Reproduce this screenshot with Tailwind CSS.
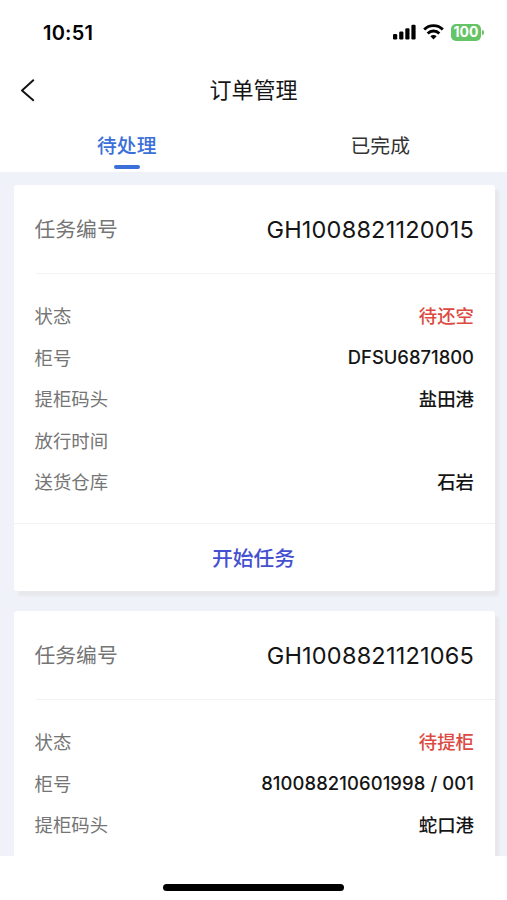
<!DOCTYPE html>
<html lang="zh-CN">
<head>
    <meta charset="UTF-8">
    <meta name="viewport" content="width=device-width, initial-scale=1.0">
    <title>订单管理</title>
    <script src="https://cdn.jsdelivr.net/npm/@tailwindcss/browser@4"></script>
</head>
<body class="bg-white font-['Inter','Noto_Sans_CJK_SC',sans-serif] text-[#151515]">
    <div class="flex flex-col h-[900px] w-[507px] overflow-hidden">
        <!-- Status bar -->
        <div class="flex items-center justify-between h-16 pl-[43px] pr-[23px] shrink-0">
            <span class="pt-px text-[20px] leading-none font-semibold tracking-[0.2px] text-black">10:51</span>
            <div class="flex items-center">
                <svg class="w-[23px] h-[16px]" viewBox="0 0 23 16" fill="#000">
                    <rect x="0" y="10" width="4.2" height="5.5" rx="1.2"/>
                    <rect x="6.2" y="7.5" width="4.2" height="8" rx="1.2"/>
                    <rect x="12.3" y="4.2" width="4.2" height="11.3" rx="1.2"/>
                    <rect x="18.4" y="0.7" width="4.2" height="14.8" rx="1.2"/>
                </svg>
                <svg class="w-[21px] h-[16px] ml-[7px]" viewBox="0 0 21 16" fill="none" stroke="#000" stroke-width="2.9">
                    <path d="M1.2 5.5a13.2 13.2 0 0 1 18.6 0"/>
                    <path d="M4.7 9.5a8.1 8.1 0 0 1 11.6 0"/>
                    <path d="M10.5 15.4l-3.1-3.2a4.4 4.4 0 0 1 6.2 0z" fill="#000" stroke="none"/>
                </svg>
                <div class="flex items-center justify-center w-[30px] h-[17px] ml-[7px] rounded-[5px] bg-[#65c466] text-white text-[14px] leading-none font-bold">100</div>
                <div class="w-[2px] h-[5px] ml-px rounded-r-full bg-[#65c466]"></div>
            </div>
        </div>

        <!-- Title bar -->
        <div class="grid grid-cols-3 items-center h-[52px] px-5 shrink-0">
            <svg class="w-4 h-6" viewBox="0 0 16 24" fill="none" stroke="#111" stroke-width="1.9" stroke-linejoin="round">
                <path d="M13.8 1.8L2 12.5l11.8 10.3"/>
            </svg>
            <h1 class="text-[22px] leading-none text-center">订单管理</h1>
        </div>

        <!-- Tabs -->
        <div class="grid grid-cols-2 h-[56px] text-[19.8px] shrink-0">
            <div class="flex flex-col items-center justify-between pt-[15px] pb-[3px] font-medium text-[#3b6fd9]">
                <span class="leading-[30px]">待处理</span>
                <span class="w-[26px] h-1 rounded-full bg-[#3b6fd9]"></span>
            </div>
            <div class="flex flex-col items-center pt-[15px] text-[#333]">
                <span class="leading-[30px]">已完成</span>
            </div>
        </div>

        <!-- Order list -->
        <div class="h-[684px] pt-[13px] pl-[14px] pr-3 overflow-hidden bg-[#eff2f9] shrink-0">
            <div class="h-[406px] mb-5 rounded-[3px] bg-white shadow-[4px_5px_2px_#e6e8ec]">
                <div class="flex flex-col h-[89px]">
                    <div class="flex items-center justify-between flex-1 pt-px pl-[20.5px] pr-[21px]">
                        <span class="text-[20.8px] text-[#757575]">任务编号</span>
                        <span class="text-[23.5px] tracking-[0.2px]">GH1008821120015</span>
                    </div>
                    <div class="h-px ml-[22px] bg-[#f3f3f3]"></div>
                </div>
                <div class="h-[249px] pl-[20.5px] pr-[21px] pt-[22px] text-[18.4px] font-medium">
                    <div class="flex items-center justify-between h-[41.6px]">
                        <span class="font-normal text-[#757575]">状态</span>
                        <span class="text-[#dc4a41]">待还空</span>
                    </div>
                    <div class="flex items-center justify-between h-[41.6px]">
                        <span class="font-normal text-[#757575]">柜号</span>
                        <span class="pb-0.5">DFSU6871800</span>
                    </div>
                    <div class="flex items-center justify-between h-[41.6px]">
                        <span class="font-normal text-[#757575]">提柜码头</span>
                        <span>盐田港</span>
                    </div>
                    <div class="flex items-center justify-between h-[41.6px]">
                        <span class="font-normal text-[#757575]">放行时间</span>
                    </div>
                    <div class="flex items-center justify-between h-[41.6px]">
                        <span class="font-normal text-[#757575]">送货仓库</span>
                        <span>石岩</span>
                    </div>
                </div>
                <div class="flex items-center justify-center h-[68px] pt-0.5 pr-0.5 border-t border-[#f3f3f3] text-[20.8px] font-medium text-[#4450d0]">开始任务</div>
            </div>

            <div class="h-[406px] rounded-[3px] bg-white shadow-[4px_5px_2px_#e6e8ec]">
                <div class="flex flex-col h-[89px]">
                    <div class="flex items-center justify-between flex-1 pt-px pl-[20.5px] pr-[21px]">
                        <span class="text-[20.8px] text-[#757575]">任务编号</span>
                        <span class="text-[23.5px] tracking-[0.2px]">GH1008821121065</span>
                    </div>
                    <div class="h-px ml-[22px] bg-[#f3f3f3]"></div>
                </div>
                <div class="pl-[20.5px] pr-[21px] pt-[22px] text-[18.4px] font-medium">
                    <div class="flex items-center justify-between h-[41.6px]">
                        <span class="font-normal text-[#757575]">状态</span>
                        <span class="text-[#dc4a41]">待提柜</span>
                    </div>
                    <div class="flex items-center justify-between h-[41.6px]">
                        <span class="font-normal text-[#757575]">柜号</span>
                        <span class="pb-0.5 tracking-[0.1px]">810088210601998 / 001</span>
                    </div>
                    <div class="flex items-center justify-between h-[41.6px]">
                        <span class="font-normal text-[#757575]">提柜码头</span>
                        <span>蛇口港</span>
                    </div>
                </div>
            </div>
        </div>

        <!-- Home indicator -->
        <div class="flex justify-center pt-7">
            <div class="w-[181px] h-[7px] rounded-full bg-black"></div>
        </div>
    </div>
</body>
</html>
